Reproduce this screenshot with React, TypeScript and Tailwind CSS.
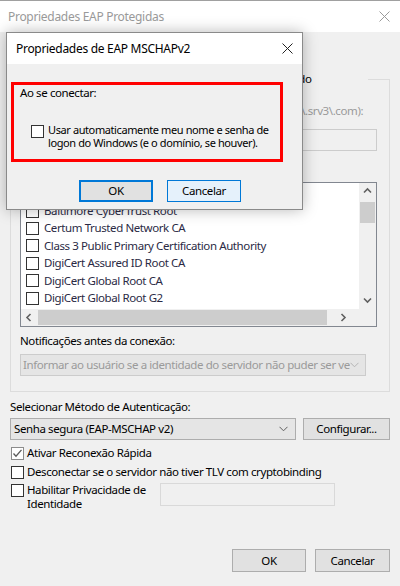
import React from "react";

// Windows 10 style PEAP properties window with the MSCHAPv2 dialog on top

const certs = [
  "AAA Certificate Services",
  "Baltimore CyberTrust Root",
  "Certum Trusted Network CA",
  "Class 3 Public Primary Certification Authority",
  "DigiCert Assured ID Root CA",
  "DigiCert Global Root CA",
  "DigiCert Global Root G2",
];

function CloseIcon({ color }: { color: string }) {
  return (
    <svg width="11" height="11" viewBox="0 0 11 11">
      <path d="M0.5 0.5L10.5 10.5M10.5 0.5L0.5 10.5" stroke={color} strokeWidth="1" />
    </svg>
  );
}

function ComboChevron({ color = "#606060" }: { color?: string }) {
  return (
    <svg width="9" height="6" viewBox="0 0 9 6">
      <path d="M0.5 0.8L4.5 4.8L8.5 0.8" stroke={color} strokeWidth="1" fill="none" />
    </svg>
  );
}

function ScrollArrow({ dir }: { dir: "up" | "down" | "left" | "right" }) {
  const d = {
    up: "M1 5.5L4.5 2L8 5.5",
    down: "M1 2.5L4.5 6L8 2.5",
    left: "M5.5 1L2 4.5L5.5 8",
    right: "M2.5 1L6 4.5L2.5 8",
  }[dir];
  return (
    <svg width="9" height="9" viewBox="0 0 9 9">
      <path d={d} stroke="#606060" strokeWidth="1.6" fill="none" />
    </svg>
  );
}

function Box({ checked, light }: { checked?: boolean; light?: boolean }) {
  return (
    <span
      className={`relative shrink-0 w-[13px] h-[13px] border bg-white flex items-center justify-center ${
        light ? "border-[#8c8c8c]" : "border-[#333333]"
      }`}
    >
      {checked && (
        <svg width="11" height="11" viewBox="0 0 11 11">
          <path d="M1.5 5.5L4 8.2L9.5 1.8" stroke="#5a5a5a" strokeWidth="1.3" fill="none" />
        </svg>
      )}
    </span>
  );
}

export default function App() {
  return (
    <div className="relative w-[400px] h-[586px] bg-[#f0f0f0] overflow-hidden text-[11.5px] leading-[16px] text-black font-['Noto_Sans',sans-serif] tracking-[-0.4px]">
      {/* main window title bar */}
      <div className="h-[32px] bg-white border-t border-[#a0a0a0] flex items-center justify-between pl-[8px] pr-[10px] text-[12px] tracking-[-0.3px]">
        <span className="text-[#9a9a9a]">Propriedades EAP Protegidas</span>
        <CloseIcon color="#9a9a9a" />
      </div>

      <div className="flex flex-col px-[10px]">
        <div className="mt-[12px] h-[16px]">Ao conectar:</div>

        {/* group box */}
        <div className="relative mt-[19px] h-[313px] border border-[#dcdcdc] pl-[9px] pr-[12px] pt-[23px] flex flex-col">
          <div className="absolute -top-[9px] left-[2px] w-[355px] flex items-center gap-[3px] bg-[#f0f0f0] pl-[1px]">
            <Box checked light />
            <span className="whitespace-nowrap">Verificar a identidade do servidor validando o certificado</span>
          </div>

          <div className="flex items-center gap-[3px] h-[16px] text-[#9a9a9a]">
            <Box light />
            <span className="whitespace-nowrap">Conectar-se a estes servidores (exemplos:srv1;srv2;.*\.srv3\.com):</span>
          </div>
          <div className="mt-[10px] ml-[16px] h-[22px] border border-[#cccccc] bg-[#f0f0f0]" />

          <div className="mt-[7px] h-[16px]">Autoridades de certificação raiz confiáveis:</div>

          {/* certificate list */}
          <div className="mt-[8px] h-[145px] border border-[#828790] bg-white flex flex-col">
            <div className="flex flex-1 min-h-0">
              <div className="flex-1 pt-[2px] pl-[5px] text-[#2a2a44]">
                {certs.map((c) => (
                  <div key={c} className="h-[17.4px] flex items-center gap-[5px] whitespace-nowrap">
                    <Box />
                    <span>{c}</span>
                  </div>
                ))}
              </div>
              <div className="w-[17px] bg-[#f0f0f0] flex flex-col items-center">
                <div className="h-[17px] flex items-center justify-center">
                  <ScrollArrow dir="up" />
                </div>
                <div className="w-[15px] h-[21px] mt-[2px] bg-[#cdcdcd]" />
                <div className="flex-1" />
                <div className="h-[17px] flex items-center justify-center">
                  <ScrollArrow dir="down" />
                </div>
              </div>
            </div>
            <div className="h-[17px] bg-[#f0f0f0] flex items-center">
              <div className="w-[17px] flex justify-center">
                <ScrollArrow dir="left" />
              </div>
              <div className="w-[289px] h-[15px] bg-[#cdcdcd]" />
              <div className="flex-1 flex justify-center">
                <ScrollArrow dir="right" />
              </div>
              <div className="w-[17px]" />
            </div>
          </div>

          <div className="mt-[6px] h-[16px]">Notificações antes da conexão:</div>
          <div className="mt-[5px] w-[346px] h-[22px] border border-[#cccccc] bg-[#e5e5e5] flex items-center justify-between pl-[2px] pr-[6px] text-[#9a9a9a]">
            <span className="whitespace-nowrap overflow-hidden">
              Informar ao usuário se a identidade do servidor não puder ser ve
            </span>
            <ComboChevron color="#b5b5b5" />
          </div>
        </div>

        <div className="mt-[7px] h-[16px]">Selecionar Método de Autenticação:</div>
        <div className="mt-[3px] flex gap-[7px]">
          <div className="w-[286px] h-[22px] border border-[#adadad] bg-[#e5e5e5] flex items-center justify-between pl-[3px] pr-[7px]">
            <span>Senha segura (EAP-MSCHAP v2)</span>
            <ComboChevron />
          </div>
          <div className="w-[87px] h-[22px] border border-[#adadad] bg-[#e1e1e1] flex items-center justify-center">
            Configurar...
          </div>
        </div>

        <div className="mt-[5px] ml-[1px] flex items-center gap-[3px] h-[16px]">
          <Box checked light />
          <span>Ativar Reconexão Rápida</span>
        </div>
        <div className="mt-[3px] ml-[1px] flex items-center gap-[3px] h-[16px]">
          <Box />
          <span className="whitespace-nowrap">Desconectar se o servidor não tiver TLV com cryptobinding</span>
        </div>
        <div className="mt-[3px] ml-[1px] flex items-start">
          <div className="flex items-start gap-[3px] w-[149px]">
            <span className="mt-[1px]">
              <Box />
            </span>
            <span className="leading-[14px]">
              Habilitar Privacidade de
              <br />
              Identidade
            </span>
          </div>
          <div className="w-[175px] h-[23px] border border-[#d9d9d9] bg-[#f0f0f0]" />
        </div>

        <div className="mt-[38px] flex justify-end gap-[9px]">
          <div className="w-[74px] h-[23px] border border-[#adadad] bg-[#e1e1e1] flex items-center justify-center">
            OK
          </div>
          <div className="w-[75px] h-[23px] border border-[#adadad] bg-[#e1e1e1] flex items-center justify-center">
            Cancelar
          </div>
        </div>
      </div>

      {/* MSCHAPv2 dialog on top */}
      <div className="absolute left-[6px] top-[32px] w-[297px] border border-[#8a8a8a] bg-[#f0f0f0] shadow-[0_0_14px_rgba(0,0,0,0.28)]">
        <div className="h-[31px] bg-white flex items-center justify-between pl-[9px] pr-[9px]">
          <span className="text-[12px] tracking-[-0.3px]">Propriedades de EAP MSCHAPv2</span>
          <CloseIcon color="#222" />
        </div>
        <div className="pt-[18px] pb-[7px] flex flex-col">
          <div className="ml-[4px] w-[272px] h-[80px] border-[3px] border-[#ff0000] pl-[6px]">
            <div className="h-[16px]">Ao se conectar:</div>
            <div className="mt-[22px] ml-[11px] flex items-start gap-[4px]">
              <span className="mt-[2px]">
                <Box />
              </span>
              <span className="text-[11px] leading-[13px] whitespace-nowrap">
                Usar automaticamente meu nome e senha de
                <br />
                logon do Windows (e o domínio, se houver).
              </span>
            </div>
          </div>
          <div className="mt-[18px] ml-[72px] flex gap-[14px]">
            <div className="w-[74px] h-[22px] border-2 border-[#0078d7] bg-[#e1e1e1] flex items-center justify-center">
              OK
            </div>
            <div className="w-[74px] h-[22px] border border-[#0078d7] bg-[#e5f1fb] flex items-center justify-center">
              Cancelar
            </div>
          </div>
        </div>
      </div>
    </div>
  );
}
